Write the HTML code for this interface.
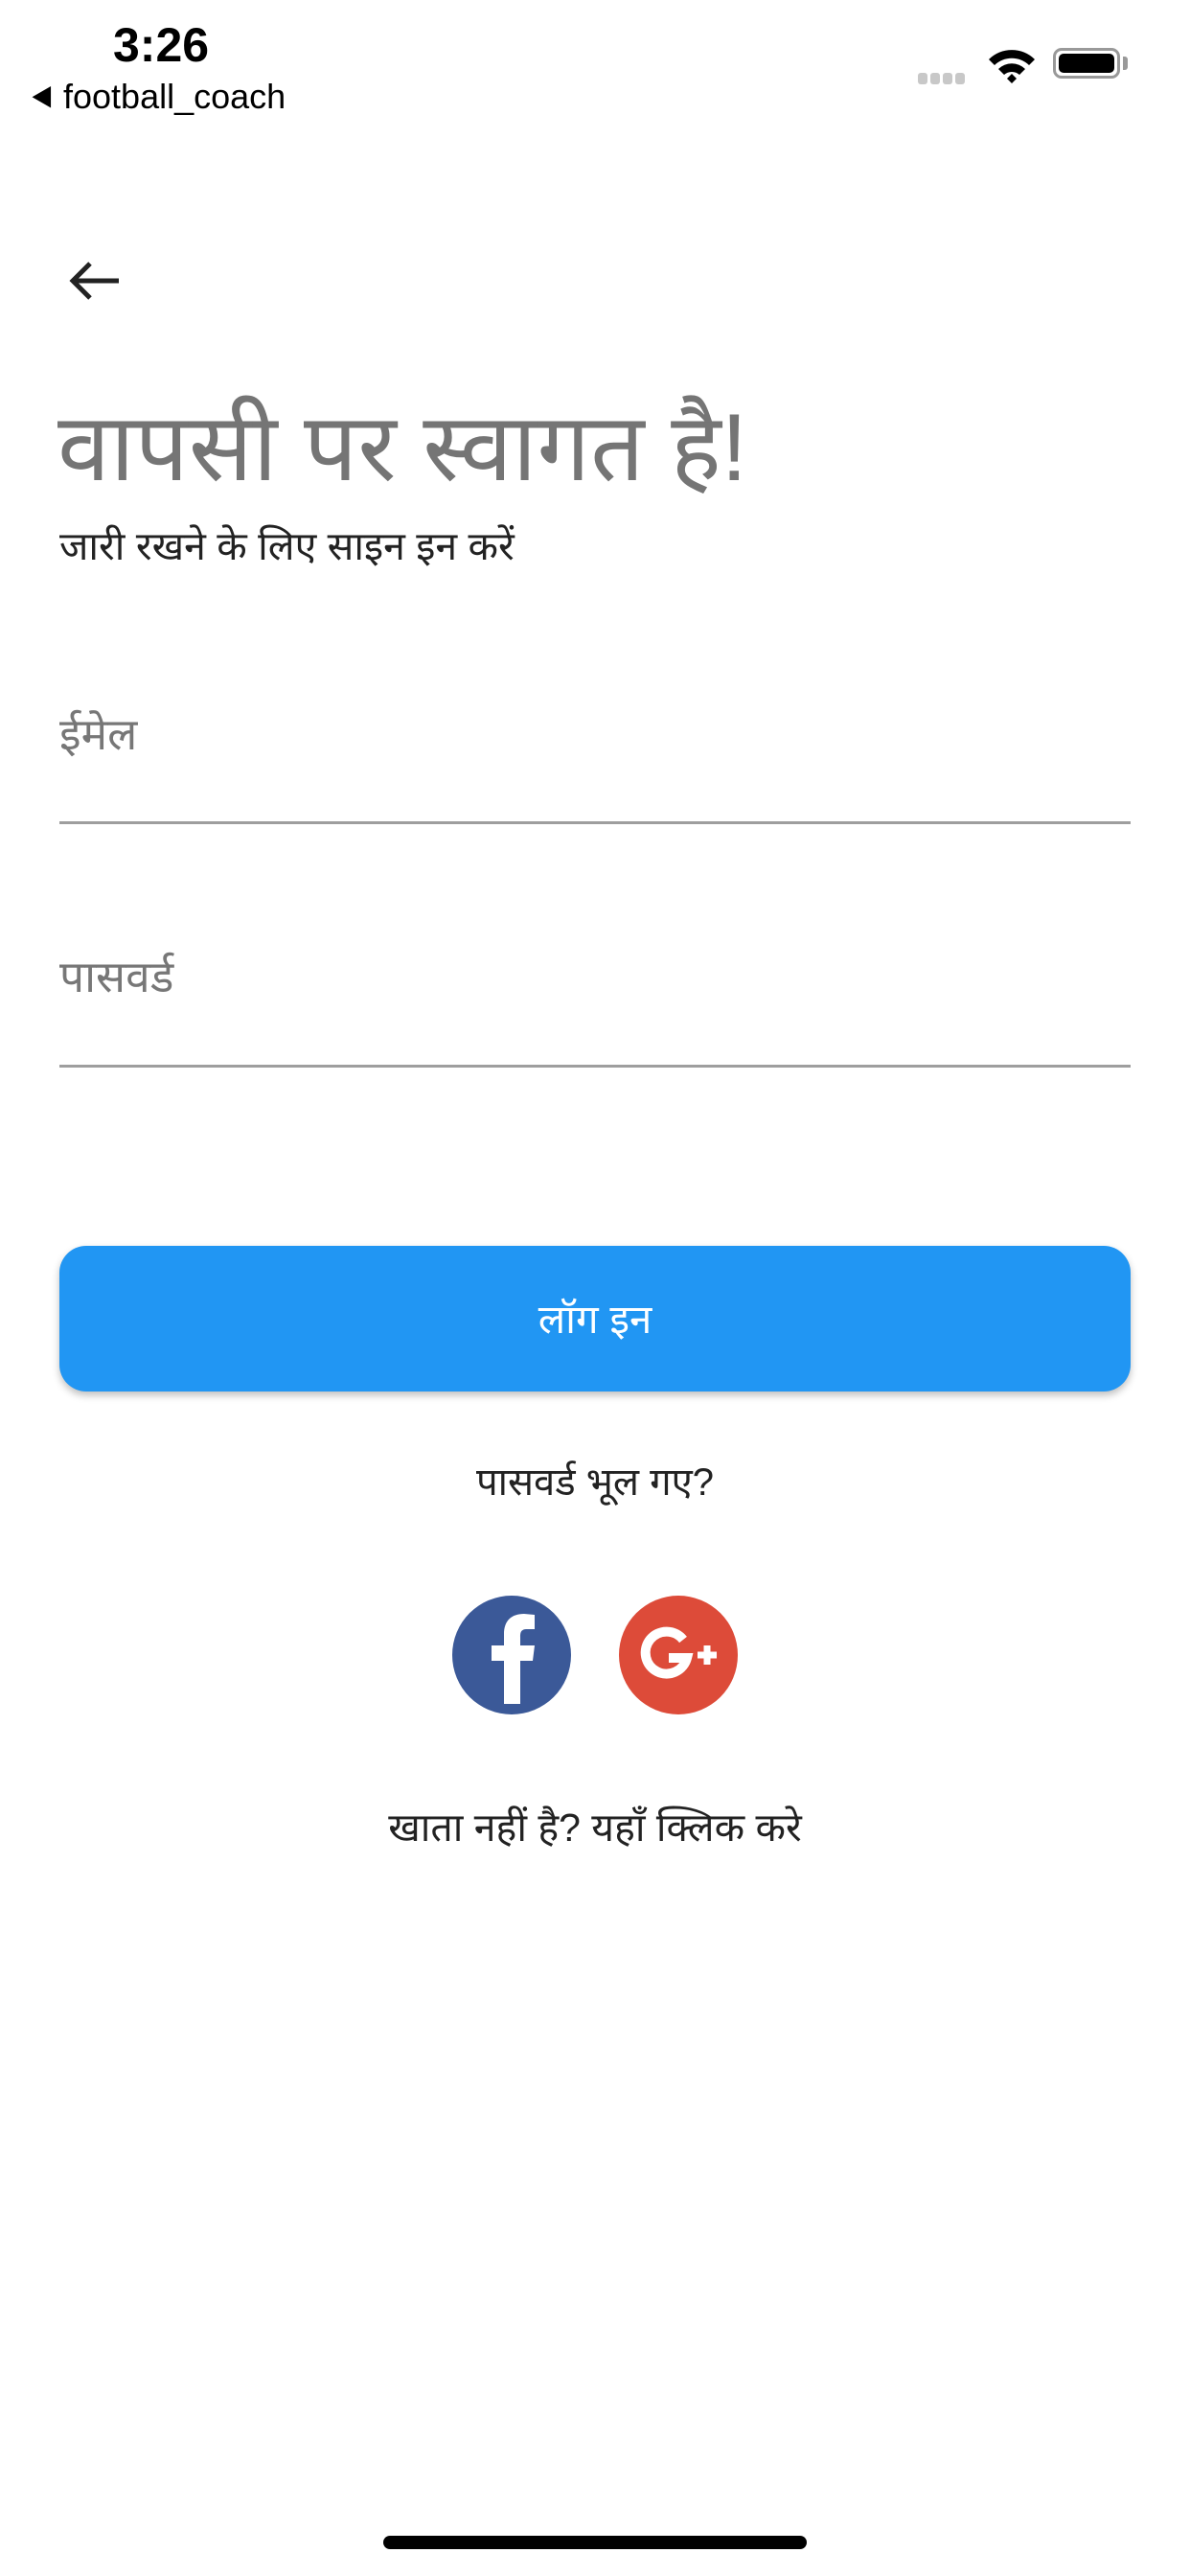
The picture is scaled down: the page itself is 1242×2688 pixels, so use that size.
<!DOCTYPE html>
<html><head><meta charset="utf-8"><style>
html,body{margin:0;padding:0;background:#fff;width:1242px;height:2688px;overflow:hidden;position:relative;font-family:"Liberation Sans","Noto Sans CJK SC",sans-serif}
.a{position:absolute;white-space:nowrap}
.dv{font-family:"Liberation Sans","Noto Sans Devanagari","Lohit Devanagari","FreeSans",sans-serif}
.line{position:absolute;left:62px;width:1118px;height:3px;background:#9e9e9e}
</style></head><body>
<div class="a" style="left:118px;top:18px;font-size:50px;font-weight:bold;color:#000">3:26</div>
<div class="a" style="left:32px;top:80px;font-size:36px;color:#000"><span style="font-size:24px;position:relative;top:-3px">◀</span> football_coach</div>
<div class="a" style="left:958px;top:75px">
<span style="display:inline-block;width:10px;height:12px;background:#c8c8c8;border-radius:3px;margin-right:3px"></span><span style="display:inline-block;width:10px;height:12px;background:#c8c8c8;border-radius:3px;margin-right:3px"></span><span style="display:inline-block;width:10px;height:12px;background:#c8c8c8;border-radius:3px;margin-right:3px"></span><span style="display:inline-block;width:10px;height:12px;background:#c8c8c8;border-radius:3px"></span></div>
<svg class="a" style="left:1030px;top:48px" width="52" height="40" viewBox="0 0 52 40"><path d="M2 14 A34 34 0 0 1 50 14 L44 20 A26 26 0 0 0 8 20 Z" fill="#000"/><path d="M12 24 A20 20 0 0 1 40 24 L34 30 A12 12 0 0 0 18 30 Z" fill="#000"/><path d="M21 34 L26 29 L31 34 L26 39 Z" fill="#000"/></svg>
<div class="a" style="left:1099px;top:50px;width:70px;height:32px;border:3px solid #999;border-radius:9px;box-sizing:border-box"><div style="position:absolute;left:3px;top:3px;right:3px;bottom:3px;background:#000;border-radius:5px"></div></div>
<div class="a" style="left:1172px;top:59px;width:5px;height:14px;background:#999;border-radius:0 3px 3px 0"></div>
<svg class="a" style="left:68px;top:268px" width="60" height="50" viewBox="0 0 60 50"><path d="M56 25 H8 M26 7 L8 25 L26 43" stroke="#222" stroke-width="5" fill="none"/></svg>
<div class="a dv" style="left:60px;top:402px;font-size:99px;color:#757575;line-height:130px">वापसी पर स्वागत है!</div>
<div class="a dv" style="left:62px;top:545px;font-size:41px;color:#222;line-height:50px">जारी रखने के लिए साइन इन करें</div>
<div class="a dv" style="left:62px;top:736px;font-size:46px;color:#777;line-height:60px">ईमेल</div>
<div class="line" style="top:857px"></div>
<div class="a dv" style="left:62px;top:989px;font-size:46px;color:#777;line-height:60px">पासवर्ड</div>
<div class="line" style="top:1111px"></div>
<div class="a" style="left:62px;top:1300px;width:1118px;height:152px;background:#2196F3;border-radius:28px;box-shadow:0 4px 8px rgba(0,0,0,.25)"></div>
<div class="a dv" style="left:62px;top:1350px;width:1118px;text-align:center;font-size:42px;color:#fff;line-height:54px">लॉग इन</div>
<div class="a dv" style="left:0;top:1520px;width:1242px;text-align:center;font-size:40px;color:#222;line-height:54px">पासवर्ड भूल गए?</div>
<svg class="a" style="left:472px;top:1665px" width="124" height="124" viewBox="0 0 124 124"><circle cx="62" cy="62" r="62" fill="#3B5998"/><path d="M54 113 V68 H41 V52 H54 V40 C54 26 62 19 75 19 L86 20 V35 H78 C72 35 71 38 71 43 V52 H86 L84 68 H71 V113 Z" fill="#fff"/></svg>
<svg class="a" style="left:646px;top:1665px" width="124" height="124" viewBox="0 0 124 124"><circle cx="62" cy="62" r="62" fill="#DD4B39"/><path d="M67 46 A22 22 0 1 0 71 65 H52" stroke="#fff" stroke-width="10" fill="none"/><path d="M92 52 V72 M82 62 H102" stroke="#fff" stroke-width="7"/></svg>
<div class="a dv" style="left:0;top:1880px;width:1242px;text-align:center;font-size:41px;color:#222;line-height:54px">खाता नहीं है? यहाँ क्लिक करे</div>
<div class="a" style="left:400px;top:2646px;width:442px;height:14px;background:#000;border-radius:7px"></div>
</body></html>
